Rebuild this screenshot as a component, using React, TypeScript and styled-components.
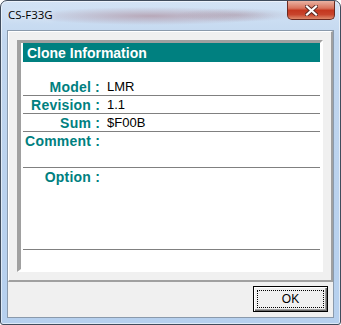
import styled, { createGlobalStyle } from "styled-components";

const GlobalStyle = createGlobalStyle`
  html, body {
    margin: 0;
    padding: 0;
    overflow: hidden;
    background: #ffffff;
  }
`;

interface InfoRow {
  label: string;
  value: string;
  height: number;
}

const rows: InfoRow[] = [
  { label: "Model :", value: "LMR", height: 18 },
  { label: "Revision :", value: "1.1", height: 18 },
  { label: "Sum :", value: "$F00B", height: 18 },
  { label: "Comment :", value: "", height: 36 },
  { label: "Option :", value: "", height: 82 },
];

const Window = styled.div`
  width: 341px;
  height: 325px;
  box-sizing: border-box;
  border: 1px solid #404c5c;
  border-radius: 7px 7px 3px 3px;
  background: linear-gradient(180deg, #d3e3f5 0%, #c2d7ef 12%, #bad2ee 60%, #b6d0ee 100%);
  box-shadow: inset 0 0 0 1px rgba(255, 255, 255, 0.55);
  display: flex;
  flex-direction: column;
  overflow: hidden;
`;

const TitleBar = styled.div`
  height: 29px;
  flex: none;
  display: flex;
  align-items: flex-start;
  padding-left: 7px;
  background:
    radial-gradient(ellipse 125px 9px at 150px 15px, rgba(150, 80, 90, 0.38), rgba(150, 80, 90, 0) 100%),
    radial-gradient(ellipse 60px 7px at 235px 14px, rgba(140, 90, 100, 0.25), rgba(140, 90, 100, 0) 100%);
`;

const TitleText = styled.span`
  font-family: "Open Sans", "Noto Sans", sans-serif;
  font-size: 11.5px;
  line-height: 16px;
  padding-top: 6px;
  color: #000000;
  text-shadow: 0 0 6px rgba(255, 255, 255, 0.9);
`;

const CloseButton = styled.div`
  margin-left: auto;
  margin-right: 5px;
  width: 48px;
  height: 19px;
  box-sizing: border-box;
  border: 1px solid #6b2a20;
  border-top: none;
  border-radius: 0 0 5px 5px;
  background: linear-gradient(180deg, #e9b2a2 0%, #d8735c 40%, #c4371f 52%, #c8442c 75%, #de8a6c 100%);
  display: flex;
  align-items: center;
  justify-content: center;
`;

const Client = styled.div`
  flex: 1;
  margin: 0 6px 6px;
  border: 1px solid #8a9aac;
  background: #f0f0f0;
  display: flex;
  flex-direction: column;
`;

const Panel = styled.div`
  border-style: solid;
  border-width: 1px 2px 2px 1px;
  border-color: #ffffff #a0a0a0 #a0a0a0 #ffffff;
  padding: 8px;
`;

const Sheet = styled.div`
  height: 232px;
  box-sizing: border-box;
  background: #ffffff;
  border-style: solid;
  border-width: 3px 3px 3px 4px;
  border-color: #a0a0a0 #ffffff #ffffff #a0a0a0;
  padding-left: 2px;
`;

const Header = styled.div`
  height: 19px;
  box-sizing: border-box;
  padding: 2px 0 0 4px;
  background: #008080;
  color: #ffffff;
  font-family: "Liberation Sans", Arial, sans-serif;
  font-weight: bold;
  font-size: 14px;
  line-height: 17px;
  margin-bottom: 16px;
`;

const Row = styled.div<{ $height: number }>`
  height: ${(p) => p.$height}px;
  box-sizing: border-box;
  border-bottom: 1px solid #808080;
  display: flex;
  align-items: flex-start;
`;

const Label = styled.span`
  width: 77px;
  flex: none;
  text-align: right;
  color: #008080;
  font-family: "Liberation Sans", Arial, sans-serif;
  font-weight: bold;
  font-size: 14px;
  letter-spacing: 0.2px;
  line-height: 18px;
`;

const Value = styled.span`
  padding-left: 7px;
  color: #000000;
  font-family: "Liberation Sans", Arial, sans-serif;
  font-size: 13px;
  line-height: 18px;
`;

const Footer = styled.div`
  flex: 1;
  display: flex;
  justify-content: flex-end;
  align-items: flex-start;
  padding: 4px 5px 0 0;
`;

const OkButton = styled.button`
  width: 75px;
  height: 26px;
  box-sizing: border-box;
  padding: 3px;
  border: 1px solid #000000;
  background: #f0f0f0;
  box-shadow: inset 1px 1px 0 #ffffff, inset -1px -1px 0 #696969, inset -2px -2px 0 #a0a0a0;
  display: flex;
  cursor: default;
`;

const FocusRing = styled.span`
  flex: 1;
  border: 1px dotted #000000;
  display: flex;
  align-items: center;
  justify-content: center;
  font-family: "Liberation Sans", Arial, sans-serif;
  font-size: 12px;
  color: #000000;
`;

const CloseGlyph = () => (
  <svg width="13" height="11" viewBox="0 0 13 11">
    <path d="M2 1.5 L11 9.5 M11 1.5 L2 9.5" stroke="#5a2a24" strokeWidth="4" strokeLinecap="square" />
    <path d="M2 1.5 L11 9.5 M11 1.5 L2 9.5" stroke="#ffffff" strokeWidth="2.2" strokeLinecap="square" />
  </svg>
);

const App = () => {
  return (
    <>
      <GlobalStyle />
      <Window>
        <TitleBar>
          <TitleText>CS-F33G</TitleText>
          <CloseButton>
            <CloseGlyph />
          </CloseButton>
        </TitleBar>
        <Client>
          <Panel>
            <Sheet>
              <Header>Clone Information</Header>
              {rows.map((row) => (
                <Row key={row.label} $height={row.height}>
                  <Label>{row.label}</Label>
                  <Value>{row.value}</Value>
                </Row>
              ))}
            </Sheet>
          </Panel>
          <Footer>
            <OkButton>
              <FocusRing>OK</FocusRing>
            </OkButton>
          </Footer>
        </Client>
      </Window>
    </>
  );
};

export default App;
